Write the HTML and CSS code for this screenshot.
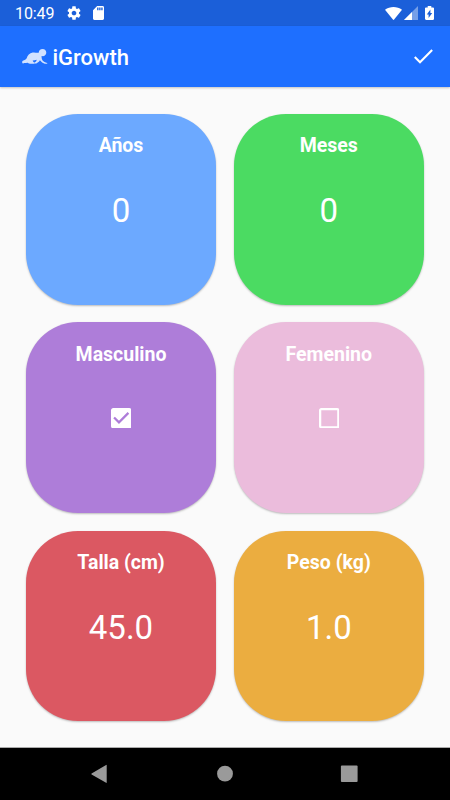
FILE: index.html
```html
<!DOCTYPE html>
<html lang="es">
<head>
<meta charset="utf-8">
<title>iGrowth</title>
<link rel="stylesheet" href="styles.css">
</head>
<body>
<div class="screen">
  <div class="status">
    <span class="clock">10:49</span>
    <svg class="gear" viewBox="0 0 24 24"><path d="M19.43 12.98c.04-.32.07-.64.07-.98s-.03-.66-.07-.98l2.11-1.65c.19-.15.24-.42.12-.64l-2-3.46c-.12-.22-.39-.3-.61-.22l-2.49 1c-.52-.4-1.08-.73-1.69-.98l-.38-2.65C14.46 2.18 14.25 2 14 2h-4c-.25 0-.46.18-.49.42l-.38 2.65c-.61.25-1.17.59-1.69.98l-2.49-1c-.23-.09-.49 0-.61.22l-2 3.46c-.13.22-.07.49.12.64l2.11 1.65c-.04.32-.07.65-.07.98s.03.66.07.98l-2.11 1.65c-.19.15-.24.42-.12.64l2 3.46c.12.22.39.3.61.22l2.49-1c.52.4 1.08.73 1.69.98l.38 2.65c.03.24.24.42.49.42h4c.25 0 .46-.18.49-.42l.38-2.65c.61-.25 1.17-.59 1.69-.98l2.49 1c.23.09.49 0 .61-.22l2-3.46c.12-.22.07-.49-.12-.64l-2.11-1.65zM12 15.500c-1.930 0-3.500-1.570-3.500-3.500s1.570-3.500 3.500-3.500 3.500 1.570 3.500 3.500-1.570 3.500-3.500 3.500z"/></svg>
    <svg class="sd" viewBox="4 2 16 20" preserveAspectRatio="none"><path d="M18 2h-8L4.02 8 4 20c0 1.100.9 2 2 2h12c1.100 0 2-.9 2-2V4c0-1.100-.9-2-2-2zm-6 6h-2V4h2v4zm3 0h-2V4h2v4zm3 0h-2V4h2v4z"/></svg>
    <svg class="wifi" viewBox="0 0 17 13"><path d="M0 2.700C4.800-.9 12.200-.9 17 2.700L9.100 12.600Q8.500 13.300 7.900 12.600z"/></svg>
    <svg class="signal" viewBox="0 0 14 14"><path opacity=".4" d="M0 14 14 0v14z"/><path d="M0 14 8 6v8z"/></svg>
    <svg class="battery" viewBox="7 2 10 20" preserveAspectRatio="none"><path fill-rule="evenodd" d="M15.670 4H14V2h-4v2H8.330C7.600 4 7 4.600 7 5.330v15.330C7 21.400 7.600 22 8.330 22h7.330c.74 0 1.340-.6 1.340-1.330V5.330C17 4.600 16.400 4 15.670 4zM11 19v-5H9l4-7v5h2z"/></svg>
  </div>
  <header class="bar">
    <svg class="baby" viewBox="0 0 26 17"><path d="M.1 13.900c.3-.9 1-1.400 2-1.600 1.100-.4 1.900-1 2.600-2C5.400 7.400 7.500 5 10.700 4.500c2.200-.3 4 .5 6 .3.100-2.300 1.600-3.900 3.900-3.900 2.200 0 3.700 1.600 3.700 3.600s-1.500 3.700-3.600 3.700c-.4 0-.8 0-1.100-.1-.1 1.900.2 3.300 1 4.400.9 1.200 2.700 1.900 4.500 2.600.4.300.2.700-.2.700-1.900.2-3.900-.2-5.300-1.700-.7-.7-1.100-1.400-1.700-1.800-.7 1.200-1.800 2.300-3.100 2.900-.8.300-2.100.4-2.600.1l.2-.8c1.300-.5 2-1.500 2.300-2.800-1.300.5-2.700.7-4 .7.100.9.600 1.300 1.400 2 .5.500.4 1.200-.3 1.300H8.300c-1 0-1.900-.5-2.600-1-1.200.3-2.400.4-3.700.4-.7.800-1.700.2-1.900-1.200z"/></svg>
    <h1 class="title">iGrowth</h1>
    <svg class="done" viewBox="3.400 5.500 17.700 13.600"><path d="M9 16.170 4.830 12l-1.420 1.410L9 19 21 7l-1.410-1.410z"/></svg>
  </header>
  <main class="grid">
    <section class="card years"><h2>Años</h2><div class="value">0</div></section>
    <section class="card months"><h2>Meses</h2><div class="value">0</div></section>
    <section class="card male"><h2>Masculino</h2><svg class="check" viewBox="3 3 18 18"><path d="M19 3H5c-1.110 0-2 .9-2 2v14c0 1.100.89 2 2 2h14c1.110 0 2-.9 2-2V5c0-1.100-.89-2-2-2zm-9 14-5-5 1.410-1.410L10 14.170l7.590-7.590L19 8l-9 9z"/></svg></section>
    <section class="card female"><h2>Femenino</h2><svg class="check" viewBox="3 3 18 18"><path d="M19 5v14H5V5h14m0-2H5c-1.100 0-2 .9-2 2v14c0 1.100.9 2 2 2h14c1.100 0 2-.9 2-2V5c0-1.100-.9-2-2-2z"/></svg></section>
    <section class="card height"><h2>Talla (cm)</h2><div class="value">45.0</div></section>
    <section class="card weight"><h2>Peso (kg)</h2><div class="value">1.0</div></section>
  </main>
  <nav class="nav">
    <svg viewBox="0 0 18 20"><path d="M15.700 1.300v17.200q0 .7-.6.300L.6 10.400Q0 10 .6 9.600L15.100 1q.6-.4.600.3z"/></svg>
    <svg viewBox="0 0 18 20"><circle cx="9" cy="9.700" r="7.900"/></svg>
    <svg viewBox="0 0 18 20"><rect x=".9" y="1.500" width="16.700" height="16.600" rx="1"/></svg>
  </nav>
</div>
</body>
</html>
```
FILE: styles.css
```css
* { box-sizing: border-box; }
body { margin: 0; font-family: Roboto, sans-serif; }
svg { display: block; flex: none; fill: #fff; }
h1, h2 { margin: 0; }

.screen {
  width: 450px;
  height: 800px;
  display: flex;
  flex-direction: column;
  background: #fafafa;
  color: #fff;
}

.status {
  height: 26px;
  padding: 0 16px 0 15px;
  display: flex;
  align-items: center;
  background: #1b5fd9;
}
.clock { width: 51px; font-size: 16px; line-height: 26px; letter-spacing: -0.1px; padding-top: 2px; }
.gear { width: 16px; height: 16px; }
.sd { width: 11px; height: 14px; margin-left: 11px; }
.wifi { width: 17px; height: 13px; margin-left: auto; }
.signal { width: 14px; height: 14px; margin-left: 2px; }
.battery { width: 9px; height: 14px; margin-left: 7px; }

.bar {
  height: 61px;
  padding: 0 17px 0 22px;
  display: flex;
  align-items: center;
  background: #1e6fff;
  box-shadow: 0 1px 2px rgba(0, 0, 0, .22);
}
.baby { width: 26px; height: 17px; opacity: .8; }
.title { flex: 1; margin: 2px 0 0 4.500px; font-size: 22px; line-height: 26px; font-weight: 500; }
.done { width: 19px; height: 15px; }

.grid {
  flex: 1;
  padding: 27px 26px 0;
  display: grid;
  grid-template-columns: 190px 190px;
  grid-auto-rows: 190.500px;
  gap: 17.800px;
  align-content: start;
}
.card {
  padding-top: 20.300px;
  display: flex;
  flex-direction: column;
  align-items: center;
  border-radius: 52px;
  box-shadow: 0 1px 2px rgba(0, 0, 0, .25);
}
.card h2 { font-size: 19.500px; line-height: 24px; font-weight: 700; }
.value { margin-top: 33px; font-size: 33px; line-height: 40px; }
.check { width: 20.500px; height: 20.500px; margin-top: 41px; }
.years { background: #6ca9ff; }
.months { background: #4bdb62; }
.male { background: #ae7dd9; }
.female { background: #ebbcdc; }
.height { background: #db5862; }
.weight { background: #ebad40; }

.nav {
  height: 53px;
  padding: 0 92px 0 91px;
  display: flex;
  justify-content: space-between;
  align-items: center;
  border-top: 1px solid #aaa;
  background: #000;
}
.nav svg { width: 18px; height: 20px; fill: #9a9a9a; }
```
